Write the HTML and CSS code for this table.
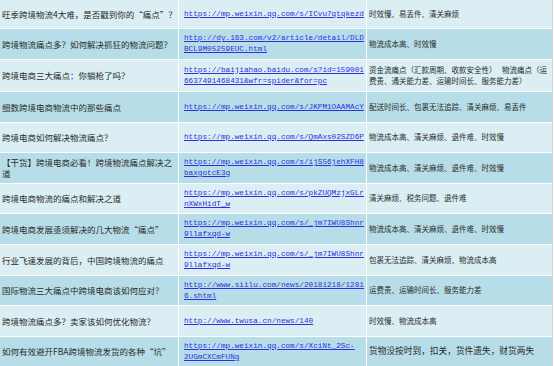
FILE: index.html
```html
<!DOCTYPE html>
<html lang="zh-CN">
<head>
<meta charset="utf-8">
<title>跨境物流痛点</title>
<link rel="stylesheet" href="styles.css">
</head>
<body>
<div class="sheet">
  <div class="row light h28">
    <div class="c1">旺季跨境物流4大难，是否戳到你的“痛点”？</div>
    <div class="c2"><a href="#">https://mp.weixin.qq.com/s/ICvu7qtqkezd</a></div>
    <div class="c3">时效慢、易丢件、清关麻烦</div>
  </div>
  <div class="row dark h30">
    <div class="c1">跨境物流痛点多？如何解决抓狂的物流问题？</div>
    <div class="c2"><a href="#">http://dy.163.com/v2/article/detail/DLD<br>BCL9M05259EUC.html</a></div>
    <div class="c3">物流成本高、时效慢</div>
  </div>
  <div class="row light h31">
    <div class="c1">跨境电商三大痛点：你躺枪了吗？</div>
    <div class="c2"><a href="#">https://baijiahao.baidu.com/s?id=159001<br>6637491468431&amp;wfr=spider&amp;for=pc</a></div>
    <div class="c3">资金流痛点（汇款周期、收款安全性）　 物流痛点（运<br>费贵、通关能力差、运输时间长、服务能力差）</div>
  </div>
  <div class="row dark h30">
    <div class="c1">细数跨境电商物流中的那些痛点</div>
    <div class="c2"><a href="#">https://mp.weixin.qq.com/s/JKPM1OAAMAcY</a></div>
    <div class="c3">配送时间长、包裹无法追踪、清关麻烦、易丢件</div>
  </div>
  <div class="row light h29">
    <div class="c1">跨境电商如何解决物流痛点？</div>
    <div class="c2"><a href="#">https://mp.weixin.qq.com/s/QmAxs02SZD6P</a></div>
    <div class="c3">物流成本高、清关麻烦、退件难、时效慢</div>
  </div>
  <div class="row dark h30">
    <div class="c1">【干货】跨境电商必看！跨境物流痛点解决之<br>道</div>
    <div class="c2"><a href="#">https://mp.weixin.qq.com/s/ijS56jehXFH8<br>baxgotcE3g</a></div>
    <div class="c3">物流成本高、清关麻烦、退件难、时效慢</div>
  </div>
  <div class="row light h29">
    <div class="c1">跨境电商物流的痛点和解决之道</div>
    <div class="c2"><a href="#">https://mp.weixin.qq.com/s/pkZUQMzjxGLr<br>nXWxHidT_w</a></div>
    <div class="c3">清关麻烦、税务问题、退件难</div>
  </div>
  <div class="row dark h30">
    <div class="c1">跨境电商发展亟须解决的几大物流“痛点”</div>
    <div class="c2"><a href="#">https://mp.weixin.qq.com/s/_jm7IWU8Shnr<br>9llafxqd-w</a></div>
    <div class="c3">物流成本高、清关麻烦、退件难、时效慢</div>
  </div>
  <div class="row light h30">
    <div class="c1">行业飞速发展的背后，中国跨境物流的痛点</div>
    <div class="c2"><a href="#">https://mp.weixin.qq.com/s/_jm7IWU8Shnr<br>9llafxqd-w</a></div>
    <div class="c3">包裹无法追踪、清关麻烦、物流成本高</div>
  </div>
  <div class="row dark h29">
    <div class="c1">国际物流三大痛点中跨境电商该如何应对？</div>
    <div class="c2"><a href="#">http://www.siilu.com/news/20181218/1281<br>6.shtml</a></div>
    <div class="c3">运费贵、运输时间长、服务能力差</div>
  </div>
  <div class="row light h30">
    <div class="c1">跨境物流痛点多？卖家该如何优化物流？</div>
    <div class="c2"><a href="#">http://www.twusa.cn/news/140</a></div>
    <div class="c3">时效慢、物流成本高</div>
  </div>
  <div class="row dark h29">
    <div class="c1">如何有效避开FBA跨境物流发货的各种“坑”</div>
    <div class="c2"><a href="#">https://mp.weixin.qq.com/s/XciNt_2Sc-<br>2UGmCXCmFUNg</a></div>
    <div class="c3 big">货物没按时到，扣关，货件遗失，财货两失</div>
  </div>
</div>
</body>
</html>
```

FILE: styles.css
```css
html, body {
  margin: 0;
  padding: 0;
  background: #ffffff;
}

body {
  width: 554px;
  height: 366px;
  overflow: hidden;
  font-family: "Noto Sans CJK SC", "Noto Sans", sans-serif;
  color: #2b2b2b;
}

.sheet {
  width: 552px;
  display: flex;
  flex-direction: column;
  gap: 1px;
  background: #ffffff;
  border-right: 1px solid #d4d4d4;
}

.row {
  display: grid;
  grid-template-columns: 178px 187px 185px;
  column-gap: 1px;
}

.h28 { height: 28px; }
.h29 { height: 29px; }
.h30 { height: 30px; }
.h31 { height: 31px; }

.row > div {
  display: flex;
  align-items: center;
  overflow: hidden;
  white-space: nowrap;
}

.light > div { background: #daeef3; }
.dark > div { background: #b7dee8; }

.c1 {
  padding-left: 2px;
  font-size: 8.5px;
  line-height: 11px;
}

.c2 {
  padding-left: 5px;
  font-family: "Liberation Mono", monospace;
  font-size: 7.7px;
  line-height: 11px;
}

.c2 a {
  color: #2f2fe0;
  text-decoration: underline;
}

.c3 {
  padding-left: 2px;
  font-size: 7.5px;
  line-height: 10.5px;
}

.c3.big {
  font-size: 8.7px;
}
```
